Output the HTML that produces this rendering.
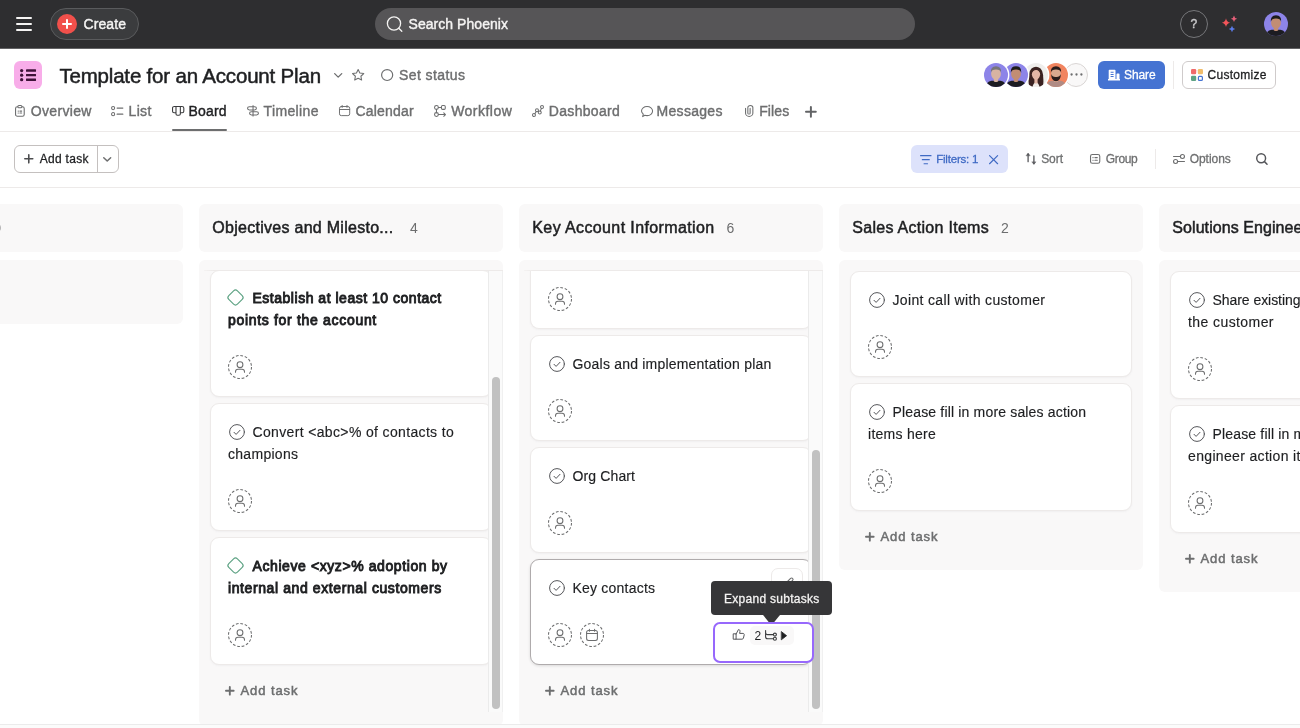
<!DOCTYPE html>
<html lang="en">
<head>
<meta charset="utf-8">
<title>Template for an Account Plan - Board</title>
<style>
*{box-sizing:border-box;margin:0;padding:0}
html,body{width:1300px;height:728px;overflow:hidden;background:#fff}
body{font-family:"Liberation Sans",sans-serif;font-size:14px;color:#1e1f21;position:relative}
.abs{position:absolute}
svg{display:block;overflow:visible}
#app{position:absolute;left:0;top:0;width:1300px;height:728px;overflow:hidden;will-change:transform}
.t{position:absolute;white-space:pre;display:block}
.med{-webkit-text-stroke:.4px currentColor}
.m2{-webkit-text-stroke:.15px currentColor}
.m3{-webkit-text-stroke:.28px currentColor}
.m5{-webkit-text-stroke:.5px currentColor}
.sb6{-webkit-text-stroke:.9px currentColor}
i{display:block}
#topbar{position:absolute;left:0;top:0;width:1300px;height:49px;background:#2e2e30;border-bottom:1px solid #626264}
#burger{position:absolute;left:16px;top:17px;width:16px;height:14px}
#burger i{position:absolute;left:0;width:16px;height:1.600px;background:#f5f4f3;border-radius:1px}
#create{position:absolute;left:50px;top:8px;width:89px;height:32px;border-radius:16px;border:1px solid #5a5b5d;background:#3b3c3e}
#create .dot{position:absolute;left:6px;top:5px;width:20px;height:20px;border-radius:50%;background:#f1504b}
#create .dot:before,#create .dot:after{content:"";position:absolute;background:#fff;border-radius:1px}
#create .dot:before{left:5px;top:9.100px;width:10px;height:1.800px}
#create .dot:after{left:9.100px;top:5px;width:1.800px;height:10px}
#search{position:absolute;left:375px;top:8px;width:540px;height:32px;border-radius:16px;background:#565557}
#help{position:absolute;left:1180px;top:10px;width:28px;height:28px;border-radius:50%;border:1px solid #76777a}
#picon{position:absolute;left:14px;top:61px;width:28px;height:28px;border-radius:6px;background:#f8ade9}
.hline{position:absolute;left:0;width:1300px;height:1px;background:#edeae9}
.vdiv{position:absolute;width:1px;background:#edeae9}
.more{position:absolute;left:1064px;top:62.500px;width:24px;height:24px;border-radius:50%;background:#f9f8f8;border:1px solid #d9d5d4}
.btn-share{position:absolute;left:1098px;top:61px;width:67px;height:28px;border-radius:6px;background:#4573d2}
.btn-cust{position:absolute;left:1182px;top:61px;width:94px;height:28px;border-radius:6px;background:#fff;border:1px solid #cfcbcb}
.btn-add{position:absolute;left:14px;top:145px;width:105px;height:28px;border-radius:6px;background:#fff;border:1px solid #c4c0bf}
.btn-add i{position:absolute;left:82px;top:0;width:1px;height:26px;background:#c4c0bf}
.chip{position:absolute;left:911px;top:145px;width:97px;height:28px;border-radius:6px;background:#dde2fb}
.colhead{position:absolute;top:204px;height:48px;width:304px;border-radius:6px;background:#f9f8f8}
.colbody{position:absolute;top:260px;width:304px;border-radius:6px;background:#f9f8f8}
.card{position:absolute;background:#fff;border:1px solid #edeae9;border-radius:9px;box-shadow:0 1px 2px rgba(109,110,111,.06)}
.card.hov{border-color:#afabac;box-shadow:0 1px 3px rgba(0,0,0,.12)}
.track{position:absolute;top:271px;width:15px;height:441px;background:#fafafa;border-left:1px solid #ebebeb;border-right:1px solid #f0f0f0}
.sb{position:absolute;width:8px;border-radius:4px;background:#c1c1c1}
.focus{position:absolute;left:713px;top:622px;width:101px;height:41px;border:2px solid #9768fc;border-radius:7px;background:#fff}
.tip{position:absolute;left:711px;top:581px;width:121px;height:34px;border-radius:4px;background:#363638}
.tip i{position:absolute;left:54px;top:28px;width:12px;height:12px;background:#363638;transform:rotate(45deg);border-radius:1px}
</style>
</head>
<body>
<div id="app">
<!-- ================= TOP BAR ================= -->
<div id="topbar">
<div id="burger"><i style="top:0"></i><i style="top:6.2px"></i><i style="top:12.4px"></i></div>
<div id="create"><div class="dot"></div></div>
<span class="t med" style="left:83.50px;top:15.00px;font-size:14px;line-height:18px;color:#f5f4f3;letter-spacing:0.094px;">Create</span>
<div id="search"></div>
<svg class="abs" style="left:386px;top:15px;" width="18" height="18" viewBox="0 0 18 18" fill="none" stroke="#f5f4f3" stroke-width="1.3" stroke-linecap="round" stroke-linejoin="round"><circle cx="8" cy="8.500" r="6.600"/><path d="M12.800 13.300l3 3"/></svg>
<span class="t med" style="left:408.50px;top:15.00px;font-size:14px;line-height:18px;color:#f5f4f3;letter-spacing:0.050px;">Search Phoenix</span>
<div id="help"></div>
<span class="t med" style="left:1190.50px;top:16.00px;font-size:12px;line-height:16px;color:#c9c9cb;letter-spacing:0.000px;">?</span>
<svg class="abs" style="left:1220px;top:14px;" width="20" height="20" viewBox="0 0 20 20" fill="none"><path d="M6 4.300 Q6.600 8.100 10.200 8.700 Q6.600 9.300 6 13.100 Q5.400 9.300 1.800 8.700 Q5.400 8.100 6 4.300Z" fill="#f2555a"/><path d="M14 1.400 Q14.400 4.300 17.200 4.700 Q14.400 5.100 14 8 Q13.600 5.100 10.800 4.700 Q13.600 4.300 14 1.400Z" fill="#e8607a"/><path d="M12 11.800 Q12.400 14.600 15.200 15 Q12.400 15.400 12 18.200 Q11.600 15.400 8.800 15 Q11.600 14.600 12 11.800Z" fill="#5a7be8"/></svg>
<svg class="abs" style="left:1264px;top:11.7px;" width="24" height="24" viewBox="0 0 24 24" fill="none"><defs><clipPath id="cp0"><circle cx="12" cy="12" r="12"/></clipPath><filter id="fcp0" x="-20%" y="-20%" width="140%" height="140%"><feGaussianBlur stdDeviation="0.450"/></filter></defs><g clip-path="url(#cp0)"><rect x="-1" y="-1" width="26" height="26" fill="#8d84e8"/><g filter="url(#fcp0)"><path d="M1.500 25 Q2 18.600 7.500 17.800 L16.500 17.800 Q22 18.600 22.500 25Z" fill="#1f1e24"/><path d="M9.800 14h4.400v4.200q-2.200 1.800-4.400 0z" fill="#c28d73"/><ellipse cx="12" cy="10.800" rx="4.900" ry="6.100" fill="#c28d73"/><path d="M6.900 9.800 Q6.300 3.200 12 3.200 Q17.700 3.200 17.100 9.800 Q16.300 6.500 12 6.600 Q7.700 6.500 6.900 9.800Z" fill="#1d1a1b"/></g></g></svg>
</div>
<!-- ================= PROJECT HEADER ================= -->
<div id="picon"></div>
<svg class="abs" style="left:19.98px;top:68.50px;" width="16.02" height="12.30" viewBox="0.000 -0.125 16.000 12.688" preserveAspectRatio="none" fill="#3f1238"><circle cx="1.650" cy="1.500" r="1.650"/><circle cx="1.650" cy="6.200" r="1.650"/><circle cx="1.650" cy="10.900" r="1.650"/><rect x="6" y="0.250" width="10" height="2.500" rx="0.400"/><rect x="6" y="4.950" width="10" height="2.500" rx="0.400"/><rect x="6" y="9.650" width="10" height="2.500" rx="0.400"/></svg>
<span class="t m5" style="left:59.40px;top:61.80px;font-size:20.5px;line-height:27px;color:#1e1f21;letter-spacing:-0.184px;">Template for an Account Plan</span>
<svg class="abs" style="left:333.50px;top:72.60px;" width="8.40" height="4.80" viewBox="0.250 0.250 9.500 5.500" preserveAspectRatio="none" fill="none" stroke="#6d6e6f" stroke-width="1.5" stroke-linecap="round" stroke-linejoin="round"><path d="M1 1l4 4 4-4"/></svg>
<svg class="abs" style="left:351.50px;top:68.80px;" width="12.30" height="11.60" viewBox="0.625 0.625 12.750 12.188" preserveAspectRatio="none" fill="none" stroke="#6d6e6f" stroke-width="1.1" stroke-linecap="round" stroke-linejoin="round"><path d="M7 1.200l1.750 3.700 4.050.550-2.950 2.800.75 4-3.600-1.950-3.600 1.950.75-4L1.200 5.450l4.050-.55z"/></svg>
<svg class="abs" style="left:380.80px;top:68.80px;" width="12.30" height="12.10" viewBox="0.688 0.688 12.625 12.625" preserveAspectRatio="none" fill="none" stroke="#6d6e6f" stroke-width="1.2" stroke-linecap="round" stroke-linejoin="round"><circle cx="7" cy="7" r="5.700"/></svg>
<span class="t med" style="left:399.00px;top:66.00px;font-size:14px;line-height:18px;color:#6d6e6f;letter-spacing:0.415px;">Set status</span>
<!-- members -->
<div class="more"></div>
<svg class="abs" style="left:1069.8px;top:73.2px;" width="13" height="3" viewBox="0 0 13 3" fill="#6d6e6f"><circle cx="1.600" cy="1.500" r="1.150"/><circle cx="6.500" cy="1.500" r="1.150"/><circle cx="11.400" cy="1.500" r="1.150"/></svg>
<svg class="abs" style="left:1044.2px;top:62.6px;" width="24" height="24" viewBox="0 0 24 24" fill="none"><defs><clipPath id="cp4"><circle cx="12" cy="12" r="12"/></clipPath><filter id="fcp4" x="-20%" y="-20%" width="140%" height="140%"><feGaussianBlur stdDeviation="0.450"/></filter></defs><circle cx="12" cy="12" r="13.400" fill="#fff"/><g clip-path="url(#cp4)"><rect x="-1" y="-1" width="26" height="26" fill="#f1845f"/><g filter="url(#fcp4)"><path d="M1.500 25 Q2 18.600 7.500 17.800 L16.500 17.800 Q22 18.600 22.500 25Z" fill="#b08b84"/><path d="M9.800 14h4.400v4.200q-2.200 1.800-4.400 0z" fill="#d9a88f"/><ellipse cx="12" cy="10.800" rx="4.900" ry="6.100" fill="#d9a88f"/><path d="M7.100 11 Q7.300 18.200 12 18.200 Q16.700 18.200 16.900 11 Q15.600 14.300 12 14 Q8.400 14.300 7.100 11Z" fill="#2b1f1c"/><path d="M6.900 9.800 Q6.300 3.200 12 3.200 Q17.700 3.200 17.100 9.800 Q16.300 6.500 12 6.600 Q7.700 6.500 6.900 9.800Z" fill="#2b1f1c"/></g></g></svg>
<svg class="abs" style="left:1024.3px;top:62.6px;" width="24" height="24" viewBox="0 0 24 24" fill="none"><defs><clipPath id="cp3"><circle cx="12" cy="12" r="12"/></clipPath><filter id="fcp3" x="-20%" y="-20%" width="140%" height="140%"><feGaussianBlur stdDeviation="0.450"/></filter></defs><circle cx="12" cy="12" r="13.400" fill="#fff"/><g clip-path="url(#cp3)"><rect x="-1" y="-1" width="26" height="26" fill="#efeeec"/><g filter="url(#fcp3)"><path d="M5 25 Q3.500 9 7.500 5.500 Q12 2 16.500 5.500 Q20.500 9 19 25Z" fill="#3a2420"/><path d="M8.500 25 Q9 19.500 12 19.500 Q15 19.500 15.500 25Z" fill="#f1ece9"/><rect x="10.400" y="15" width="3.200" height="5.500" fill="#e3b6a6"/><ellipse cx="12" cy="11.300" rx="4.100" ry="5.400" fill="#e3b6a6"/><path d="M7.600 10.500 Q7.500 4.800 12 4.800 Q16.500 4.800 16.400 10.500 Q14.500 6.500 12 7 Q9 7.200 7.600 10.500Z" fill="#3a2420"/></g></g></svg>
<svg class="abs" style="left:1004.4px;top:62.6px;" width="24" height="24" viewBox="0 0 24 24" fill="none"><defs><clipPath id="cp2"><circle cx="12" cy="12" r="12"/></clipPath><filter id="fcp2" x="-20%" y="-20%" width="140%" height="140%"><feGaussianBlur stdDeviation="0.450"/></filter></defs><circle cx="12" cy="12" r="13.400" fill="#fff"/><g clip-path="url(#cp2)"><rect x="-1" y="-1" width="26" height="26" fill="#8d84e8"/><g filter="url(#fcp2)"><path d="M1.500 25 Q2 18.600 7.500 17.800 L16.500 17.800 Q22 18.600 22.500 25Z" fill="#1f1e24"/><path d="M9.800 14h4.400v4.200q-2.200 1.800-4.400 0z" fill="#c28d73"/><ellipse cx="12" cy="10.800" rx="4.900" ry="6.100" fill="#c28d73"/><path d="M6.900 9.800 Q6.300 3.200 12 3.200 Q17.700 3.200 17.100 9.800 Q16.300 6.500 12 6.600 Q7.700 6.500 6.900 9.800Z" fill="#1d1a1b"/></g></g></svg>
<svg class="abs" style="left:984.2px;top:62.6px;" width="24" height="24" viewBox="0 0 24 24" fill="none"><defs><clipPath id="cp1"><circle cx="12" cy="12" r="12"/></clipPath><filter id="fcp1" x="-20%" y="-20%" width="140%" height="140%"><feGaussianBlur stdDeviation="0.450"/></filter></defs><circle cx="12" cy="12" r="13.400" fill="#fff"/><g clip-path="url(#cp1)"><rect x="-1" y="-1" width="26" height="26" fill="#8d84e8"/><g filter="url(#fcp1)"><path d="M1.500 25 Q2 18.600 7.500 17.800 L16.500 17.800 Q22 18.600 22.500 25Z" fill="#1f1e22"/><path d="M9.800 14h4.400v4.200q-2.200 1.800-4.400 0z" fill="#d8b3a2"/><ellipse cx="12" cy="10.800" rx="4.900" ry="6.100" fill="#d8b3a2"/><path d="M6.900 9.800 Q6.300 3.200 12 3.200 Q17.700 3.200 17.100 9.800 Q16.300 6.500 12 6.600 Q7.700 6.500 6.900 9.800Z" fill="#77757a"/></g></g></svg>
<div class="btn-share"></div>
<svg class="abs" style="left:1107.5px;top:69px;" width="12" height="12" viewBox="0 0 12 12" fill="#fff"><path d="M1.500 0.800h5.200a.8.800 0 0 1 .8.800V10h1V5.300a.8.800 0 0 1 .800-.8h1.400a.8.800 0 0 1 .800.800V10h.5v1.600H0V10h.7V1.600a.8.800 0 0 1 .8-.8zM2.600 2.700v1h3v-1zm0 2.200v1h3v-1zm0 2.200v1h3v-1z" fill-rule="evenodd"/></svg>
<span class="t m3" style="left:1124.00px;top:67.20px;font-size:12px;line-height:16px;color:#fff;letter-spacing:-0.083px;">Share</span>
<div class="vdiv" style="left:1173px;top:61px;height:28px"></div>
<div class="btn-cust"></div>
<svg class="abs" style="left:1191px;top:69px;" width="12" height="12" viewBox="0 0 12 12" fill="none"><rect x="0" y="0" width="5.200" height="5.200" rx="1.300" fill="#f06a6a"/><rect x="6.800" y="0" width="5.200" height="5.200" rx="1.300" fill="#f1bd6c"/><rect x="0" y="6.800" width="5.200" height="5.200" rx="1.300" fill="#5da283"/><rect x="7.400" y="7.400" width="4" height="4" rx="1" fill="none" stroke="#4573d2" stroke-width="1.200"/></svg>
<span class="t m3" style="left:1207.50px;top:67.20px;font-size:12px;line-height:16px;color:#1e1f21;letter-spacing:0.289px;">Customize</span>
<!-- ================= TABS ================= -->
<svg class="abs" style="left:15.06px;top:104.90px;" width="9.78" height="11.80" viewBox="0.438 0.438 9.812 11.938" preserveAspectRatio="none" fill="none" stroke="#6d6e6f" stroke-width="1.1" stroke-linecap="round" stroke-linejoin="round"><rect x="1" y="2.200" width="8.700" height="9.600" rx="1.800"/><rect x="3.300" y="1" width="4.100" height="2.300" rx="1.100" fill="#fff"/><path d="M3.600 6.600h.2M5.400 6.600h1.700M3.600 8.600h.2M5.400 8.600h1.700"/></svg>
<span class="t med" style="left:30.70px;top:101.70px;font-size:14px;line-height:18px;color:#6d6e6f;letter-spacing:0.349px;">Overview</span>
<svg class="abs" style="left:111.20px;top:105.60px;" width="12.40" height="10.30" viewBox="0.125 1.188 12.812 10.375" preserveAspectRatio="none" fill="none" stroke="#6d6e6f" stroke-width="1.1" stroke-linecap="round" stroke-linejoin="round"><circle cx="2.300" cy="3.300" r="1.600"/><circle cx="2.300" cy="9.400" r="1.600"/><path d="M6.400 3.300h6M6.400 9.400h6"/></svg>
<span class="t med" style="left:128.60px;top:101.70px;font-size:14px;line-height:18px;color:#6d6e6f;letter-spacing:0.301px;">List</span>
<svg class="abs" style="left:171.60px;top:105.75px;" width="12.35" height="9.75" viewBox="0.250 0.438 12.500 10.938" preserveAspectRatio="none" fill="none" stroke="#3b3c3e" stroke-width="1.1" stroke-linecap="round" stroke-linejoin="round"><path d="M2.600 1h7.800a1.800 1.800 0 0 1 1.800 1.800v3.600a1.600 1.600 0 0 1-1.600 1.600H8.700v1.400a1.400 1.400 0 0 1-1.400 1.400H5.700a1.400 1.400 0 0 1-1.400-1.400V8H2.400a1.600 1.600 0 0 1-1.600-1.600V2.800A1.800 1.800 0 0 1 2.600 1zM4.300 1v7M8.700 1v7"/></svg>
<span class="t med" style="left:188.60px;top:101.70px;font-size:14px;line-height:18px;color:#1e1f21;letter-spacing:0.135px;">Board</span>
<svg class="abs" style="left:246.90px;top:104.90px;" width="12.00" height="11.60" viewBox="0.438 0.062 12.438 13.062" preserveAspectRatio="none" fill="none" stroke="#6d6e6f" stroke-width="1.1" stroke-linecap="round" stroke-linejoin="round"><rect x="1" y="2" width="9.200" height="3.700" rx="1.850"/><rect x="3.100" y="7.600" width="9.200" height="3.700" rx="1.850"/><path d="M6.700 0.600v12"/></svg>
<span class="t med" style="left:263.50px;top:101.70px;font-size:14px;line-height:18px;color:#6d6e6f;letter-spacing:0.373px;">Timeline</span>
<svg class="abs" style="left:339.10px;top:105.40px;" width="11.20" height="11.10" viewBox="0.250 0.250 12.500 12.688" preserveAspectRatio="none" fill="none" stroke="#6d6e6f" stroke-width="1.1" stroke-linecap="round" stroke-linejoin="round"><rect x="0.800" y="2" width="11.400" height="10.400" rx="2"/><path d="M0.800 5.400h11.400M3.800 0.800v2.200M9.200 0.800v2.200"/></svg>
<span class="t med" style="left:355.40px;top:101.70px;font-size:14px;line-height:18px;color:#6d6e6f;letter-spacing:0.225px;">Calendar</span>
<svg class="abs" style="left:434.20px;top:104.80px;" width="12.00" height="12.00" viewBox="0.250 0.250 12.500 12.500" preserveAspectRatio="none" fill="none" stroke="#6d6e6f" stroke-width="1.1" stroke-linecap="round" stroke-linejoin="round"><circle cx="2.800" cy="2.800" r="2"/><rect x="8" y="0.800" width="4" height="4" rx="1.200"/><circle cx="2.800" cy="10.200" r="2"/><path d="M4.800 2.800h3.200M2.800 4.800v3.400M4.800 10.200h7.400M10.400 8.400l1.800 1.800-1.800 1.800"/></svg>
<span class="t med" style="left:451.20px;top:101.70px;font-size:14px;line-height:18px;color:#6d6e6f;letter-spacing:0.470px;">Workflow</span>
<svg class="abs" style="left:532.20px;top:104.80px;" width="12.00" height="12.00" viewBox="0.062 0.062 12.875 12.875" preserveAspectRatio="none" fill="none" stroke="#6d6e6f" stroke-width="1.1" stroke-linecap="round" stroke-linejoin="round"><circle cx="2.200" cy="10.800" r="1.600"/><circle cx="5.400" cy="5.800" r="1.600"/><circle cx="8.400" cy="8" r="1.600"/><circle cx="10.800" cy="2.200" r="1.600"/><path d="M3.100 9.400l1.400-2.200M6.700 6.800l.4.300M9 6.500l1.200-2.800"/></svg>
<span class="t med" style="left:548.80px;top:101.70px;font-size:14px;line-height:18px;color:#6d6e6f;letter-spacing:0.312px;">Dashboard</span>
<svg class="abs" style="left:640.50px;top:105.70px;" width="12.10" height="11.10" viewBox="0.062 0.438 12.875 11.688" preserveAspectRatio="none" fill="none" stroke="#6d6e6f" stroke-width="1.1" stroke-linecap="round" stroke-linejoin="round"><path d="M6.500 1c3.300 0 5.900 2.100 5.900 4.800s-2.600 4.800-5.900 4.800c-.8 0-1.600-.1-2.300-.4L1.800 11.600l.7-2.600C1.300 8.100.6 7 .6 5.800.6 3.100 3.200 1 6.500 1z"/></svg>
<span class="t med" style="left:656.60px;top:101.70px;font-size:14px;line-height:18px;color:#6d6e6f;letter-spacing:0.284px;">Messages</span>
<svg class="abs" style="left:745.10px;top:104.90px;" width="8.40" height="11.90" viewBox="0.500 0.562 7.375 12.312" preserveAspectRatio="none" fill="none" stroke="#6d6e6f" stroke-width="0.95" stroke-linecap="round" stroke-linejoin="round"><path d="M1 4v5.200a3.200 3.200 0 0 0 6.400 0V3.200a2.200 2.200 0 0 0-4.400 0v5.800a1 1 0 0 0 2 0V4"/></svg>
<span class="t med" style="left:759.20px;top:101.70px;font-size:14px;line-height:18px;color:#6d6e6f;letter-spacing:0.134px;">Files</span>
<div class="abs" style="left:171.500px;top:129px;width:55px;height:2px;background:#6d6e6f;border-radius:1px"></div>
<svg class="abs" style="left:805.40px;top:106.00px;" width="11.80" height="11.70" viewBox="0.000 0.000 12.000 12.000" preserveAspectRatio="none" fill="none" stroke="#626365" stroke-width="2" stroke-linecap="round" stroke-linejoin="round"><path d="M6 1v10M1 6h10"/></svg>
<div class="hline" style="top:131px"></div>
<!-- ================= TOOLBAR ================= -->
<div class="btn-add"><i></i></div>
<svg class="abs" style="left:24.20px;top:154.20px;" width="9.60" height="9.60" viewBox="0.000 0.000 9.625 9.562" preserveAspectRatio="none" fill="none" stroke="#4c4d4f" stroke-width="1.6" stroke-linecap="round" stroke-linejoin="round"><path d="M4.800 0.800v8M0.800 4.800h8"/></svg>
<span class="t m3" style="left:39.70px;top:151.20px;font-size:12px;line-height:16px;color:#1e1f21;letter-spacing:0.300px;">Add task</span>
<svg class="abs" style="left:103.40px;top:156.80px;" width="8.40" height="4.80" viewBox="-0.062 -0.062 8.500 5.000" preserveAspectRatio="none" fill="none" stroke="#6d6e6f" stroke-width="1.5" stroke-linecap="round" stroke-linejoin="round"><path d="M0.700 0.700l3.500 3.500 3.500-3.500"/></svg>
<div class="chip"></div>
<svg class="abs" style="left:920.00px;top:154.80px;" width="11.60" height="9.40" viewBox="0.000 0.875 12.000 9.250" preserveAspectRatio="none" fill="none" stroke="#3f6ac4" stroke-width="1.2" stroke-linecap="round" stroke-linejoin="round"><path d="M0.600 1.500h10.800M2.400 5.500h7.200M4.200 9.500h3.600"/></svg>
<span class="t m3" style="left:936.20px;top:151.70px;font-size:11.5px;line-height:15px;color:#3f6ac4;letter-spacing:-0.199px;">Filters: 1</span>
<svg class="abs" style="left:988.90px;top:154.50px;" width="9.20" height="9.30" viewBox="0.062 0.062 8.875 8.875" preserveAspectRatio="none" fill="none" stroke="#3f6ac4" stroke-width="1.1" stroke-linecap="round" stroke-linejoin="round"><path d="M0.600 0.600l7.800 7.800M8.400 0.600l-7.800 7.800"/></svg>
<svg class="abs" style="left:1026.20px;top:153.20px;" width="10.00" height="11.60" viewBox="0.250 0.438 9.312 12.125" preserveAspectRatio="none" fill="none" stroke="#55565a" stroke-width="1.2" stroke-linecap="round" stroke-linejoin="round"><path d="M2.200 1.400v8.200M7.600 3.400v8.200" /><path d="M0.500 3l1.700-2.300L3.900 3zM5.900 10l1.700 2.300L9.300 10z" fill="#55565a" stroke-width="0.500"/></svg>
<span class="t m3" style="left:1041.20px;top:151.20px;font-size:12px;line-height:16px;color:#6d6e6f;letter-spacing:-0.072px;">Sort</span>
<svg class="abs" style="left:1090.20px;top:154.00px;" width="10.30" height="9.80" viewBox="0.062 0.062 10.375 9.875" preserveAspectRatio="none" fill="none" stroke="#6d6e6f" stroke-width="1.1" stroke-linecap="round" stroke-linejoin="round"><rect x="0.600" y="0.600" width="9.300" height="8.800" rx="1.800"/><path d="M3 3.700h.2M5 3.700h2.400M3 6.300h.2M5 6.300h2.400"/></svg>
<span class="t m3" style="left:1105.80px;top:151.20px;font-size:12px;line-height:16px;color:#6d6e6f;letter-spacing:-0.365px;">Group</span>
<div class="vdiv" style="left:1155px;top:149px;height:20px"></div>
<svg class="abs" style="left:1173.20px;top:153.80px;" width="12.00" height="10.00" viewBox="0.062 -0.062 11.875 10.125" preserveAspectRatio="none" fill="none" stroke="#6d6e6f" stroke-width="1.1" stroke-linecap="round" stroke-linejoin="round"><circle cx="9.400" cy="2.500" r="2"/><circle cx="2.600" cy="7.500" r="2"/><path d="M0.600 2.500h6.800M4.600 7.500h6.800"/></svg>
<span class="t m3" style="left:1189.70px;top:151.20px;font-size:12px;line-height:16px;color:#6d6e6f;letter-spacing:-0.043px;">Options</span>
<svg class="abs" style="left:1256.20px;top:153.00px;" width="11.80" height="12.00" viewBox="0.062 0.062 12.000 12.000" preserveAspectRatio="none" fill="none" stroke="#55565a" stroke-width="1.5" stroke-linecap="round" stroke-linejoin="round"><circle cx="5.300" cy="5.300" r="4.500"/><path d="M8.700 8.700l2.600 2.600"/></svg>
<div class="hline" style="top:187px"></div>
<!-- ================= BOARD ================= -->
<div class="colhead" style="left:-121px"></div><div class="colbody" style="left:-121px;height:64px"></div>
<span class="t" style="left:-6.70px;top:219.00px;font-size:14px;line-height:18px;color:#6d6e6f;letter-spacing:0.000px;">0</span>
<div class="colhead" style="left:199px"></div><div class="colbody" style="left:199px;height:466px"></div>
<span class="t m5" style="left:212.30px;top:217.00px;font-size:16px;line-height:21px;color:#1e1f21;letter-spacing:0.275px;">Objectives and Milesto...</span>
<span class="t" style="left:410.00px;top:219.00px;font-size:14px;line-height:18px;color:#6d6e6f;letter-spacing:0.000px;">4</span>
<div class="colhead" style="left:519px"></div><div class="colbody" style="left:519px;height:466px"></div>
<span class="t m5" style="left:532.30px;top:217.00px;font-size:16px;line-height:21px;color:#1e1f21;letter-spacing:0.385px;">Key Account Information</span>
<span class="t" style="left:726.50px;top:219.00px;font-size:14px;line-height:18px;color:#6d6e6f;letter-spacing:0.000px;">6</span>
<div class="colhead" style="left:839px"></div><div class="colbody" style="left:839px;height:310px"></div>
<span class="t m5" style="left:852.30px;top:217.00px;font-size:16px;line-height:21px;color:#1e1f21;letter-spacing:0.281px;">Sales Action Items</span>
<span class="t" style="left:1001.00px;top:219.00px;font-size:14px;line-height:18px;color:#6d6e6f;letter-spacing:0.000px;">2</span>
<div class="colhead" style="left:1159px"></div><div class="colbody" style="left:1159px;height:332px"></div>
<span class="t m5" style="left:1172.30px;top:217.00px;font-size:16px;line-height:21px;color:#1e1f21;letter-spacing:0.074px;">Solutions Engineer Action Items</span>
<span class="t" style="left:1500.00px;top:219.00px;font-size:14px;line-height:18px;color:#6d6e6f;letter-spacing:0.000px;">3</span>
<div class="card" style="left:210px;top:270px;width:282px;height:127px;"></div><span class="t sb6" style="left:252.50px;top:288.60px;font-size:14px;line-height:18px;color:#1e1f21;letter-spacing:0.515px;">Establish at least 10 contact</span><span class="t sb6" style="left:228.00px;top:310.60px;font-size:14px;line-height:18px;color:#1e1f21;letter-spacing:0.685px;">points for the account</span><svg class="abs" style="left:227.2px;top:288.6px;" width="17" height="17" viewBox="0 0 17 17" fill="none" stroke="#5da283" stroke-width="1.15" stroke-linecap="round" stroke-linejoin="round"><rect x="2.400" y="2.400" width="12.200" height="12.200" rx="2.700" transform="rotate(45 8.500 8.500)"/></svg><svg class="abs" style="left:227.8px;top:355px;" width="24" height="24" viewBox="0 0 24 24" fill="none" stroke="#6d6e6f" stroke-width="1.05" stroke-linecap="round" stroke-linejoin="round"><circle cx="12" cy="12" r="11.500" stroke-dasharray="2.700 1.816" stroke-linecap="butt"/><circle cx="12" cy="9.700" r="2.900"/><path d="M7.500 17.300v-.5a2.500 2.500 0 0 1 2.500-2.500h4a2.500 2.500 0 0 1 2.500 2.500v.5"/></svg>
<div class="card" style="left:210px;top:403px;width:282px;height:128px;"></div><span class="t m2" style="left:252.50px;top:422.60px;font-size:14px;line-height:18px;color:#1e1f21;letter-spacing:0.350px;">Convert &lt;abc&gt;% of contacts to</span><span class="t m2" style="left:228.00px;top:444.60px;font-size:14px;line-height:18px;color:#1e1f21;letter-spacing:0.287px;">champions</span><svg class="abs" style="left:228.7px;top:424px;" width="16" height="16" viewBox="0 0 16 16" fill="none" stroke="#55565a" stroke-width="1" stroke-linecap="round" stroke-linejoin="round"><circle cx="8" cy="8" r="7.400"/><path d="M5 8.300l2.100 2.100 3.900-4.100" stroke-width="1"/></svg><svg class="abs" style="left:227.8px;top:489px;" width="24" height="24" viewBox="0 0 24 24" fill="none" stroke="#6d6e6f" stroke-width="1.05" stroke-linecap="round" stroke-linejoin="round"><circle cx="12" cy="12" r="11.500" stroke-dasharray="2.700 1.816" stroke-linecap="butt"/><circle cx="12" cy="9.700" r="2.900"/><path d="M7.500 17.300v-.5a2.500 2.500 0 0 1 2.500-2.500h4a2.500 2.500 0 0 1 2.500 2.500v.5"/></svg>
<div class="card" style="left:210px;top:537px;width:282px;height:128px;"></div><span class="t sb6" style="left:252.50px;top:556.60px;font-size:14px;line-height:18px;color:#1e1f21;letter-spacing:0.589px;">Achieve &lt;xyz&gt;% adoption by</span><span class="t sb6" style="left:228.00px;top:578.60px;font-size:14px;line-height:18px;color:#1e1f21;letter-spacing:0.597px;">internal and external customers</span><svg class="abs" style="left:227.2px;top:556.6px;" width="17" height="17" viewBox="0 0 17 17" fill="none" stroke="#5da283" stroke-width="1.15" stroke-linecap="round" stroke-linejoin="round"><rect x="2.400" y="2.400" width="12.200" height="12.200" rx="2.700" transform="rotate(45 8.500 8.500)"/></svg><svg class="abs" style="left:227.8px;top:623px;" width="24" height="24" viewBox="0 0 24 24" fill="none" stroke="#6d6e6f" stroke-width="1.05" stroke-linecap="round" stroke-linejoin="round"><circle cx="12" cy="12" r="11.500" stroke-dasharray="2.700 1.816" stroke-linecap="butt"/><circle cx="12" cy="9.700" r="2.900"/><path d="M7.500 17.300v-.5a2.500 2.500 0 0 1 2.500-2.500h4a2.500 2.500 0 0 1 2.500 2.500v.5"/></svg>
<svg class="abs" style="left:224.70px;top:685.50px;" width="9.60" height="9.60" viewBox="-0.062 -0.062 9.688 9.688" preserveAspectRatio="none" fill="none" stroke="#6d6e6f" stroke-width="1.9" stroke-linecap="round" stroke-linejoin="round"><path d="M4.800 0.900v7.800M0.900 4.800h7.800"/></svg><span class="t m5" style="left:240.50px;top:681.80px;font-size:13px;line-height:17px;color:#6d6e6f;letter-spacing:0.915px;">Add task</span>
<div class="abs" style="left:204px;top:270px;width:299px;height:1px;background:linear-gradient(90deg,rgba(237,234,233,.4),#edeae9 10px)"></div><div class="track" style="left:488px"></div><div class="sb" style="left:492px;top:377px;height:332px"></div>
<div class="card" style="left:530px;top:271px;width:282px;height:58px;border-top:0;border-radius:0 0 9px 9px"></div>
<svg class="abs" style="left:547.8px;top:287px;" width="24" height="24" viewBox="0 0 24 24" fill="none" stroke="#6d6e6f" stroke-width="1.05" stroke-linecap="round" stroke-linejoin="round"><circle cx="12" cy="12" r="11.500" stroke-dasharray="2.700 1.816" stroke-linecap="butt"/><circle cx="12" cy="9.700" r="2.900"/><path d="M7.500 17.300v-.5a2.500 2.500 0 0 1 2.500-2.500h4a2.500 2.500 0 0 1 2.500 2.500v.5"/></svg>
<div class="card" style="left:530px;top:335px;width:282px;height:106px;"></div><span class="t m2" style="left:572.50px;top:354.60px;font-size:14px;line-height:18px;color:#1e1f21;letter-spacing:0.205px;">Goals and implementation plan</span><svg class="abs" style="left:548.7px;top:356px;" width="16" height="16" viewBox="0 0 16 16" fill="none" stroke="#55565a" stroke-width="1" stroke-linecap="round" stroke-linejoin="round"><circle cx="8" cy="8" r="7.400"/><path d="M5 8.300l2.100 2.100 3.900-4.100" stroke-width="1"/></svg><svg class="abs" style="left:547.8px;top:399px;" width="24" height="24" viewBox="0 0 24 24" fill="none" stroke="#6d6e6f" stroke-width="1.05" stroke-linecap="round" stroke-linejoin="round"><circle cx="12" cy="12" r="11.500" stroke-dasharray="2.700 1.816" stroke-linecap="butt"/><circle cx="12" cy="9.700" r="2.900"/><path d="M7.500 17.300v-.5a2.500 2.500 0 0 1 2.500-2.500h4a2.500 2.500 0 0 1 2.500 2.500v.5"/></svg>
<div class="card" style="left:530px;top:447px;width:282px;height:106px;"></div><span class="t m2" style="left:572.50px;top:466.60px;font-size:14px;line-height:18px;color:#1e1f21;letter-spacing:0.129px;">Org Chart</span><svg class="abs" style="left:548.7px;top:468px;" width="16" height="16" viewBox="0 0 16 16" fill="none" stroke="#55565a" stroke-width="1" stroke-linecap="round" stroke-linejoin="round"><circle cx="8" cy="8" r="7.400"/><path d="M5 8.300l2.100 2.100 3.900-4.100" stroke-width="1"/></svg><svg class="abs" style="left:547.8px;top:511px;" width="24" height="24" viewBox="0 0 24 24" fill="none" stroke="#6d6e6f" stroke-width="1.05" stroke-linecap="round" stroke-linejoin="round"><circle cx="12" cy="12" r="11.500" stroke-dasharray="2.700 1.816" stroke-linecap="butt"/><circle cx="12" cy="9.700" r="2.900"/><path d="M7.500 17.300v-.5a2.500 2.500 0 0 1 2.500-2.500h4a2.500 2.500 0 0 1 2.500 2.500v.5"/></svg>
<div class="card hov" style="left:530px;top:559px;width:282px;height:106px;"></div><span class="t m2" style="left:572.50px;top:578.60px;font-size:14px;line-height:18px;color:#1e1f21;letter-spacing:0.213px;">Key contacts</span><svg class="abs" style="left:548.7px;top:580px;" width="16" height="16" viewBox="0 0 16 16" fill="none" stroke="#55565a" stroke-width="1" stroke-linecap="round" stroke-linejoin="round"><circle cx="8" cy="8" r="7.400"/><path d="M5 8.300l2.100 2.100 3.900-4.100" stroke-width="1"/></svg><svg class="abs" style="left:547.8px;top:623px;" width="24" height="24" viewBox="0 0 24 24" fill="none" stroke="#6d6e6f" stroke-width="1.05" stroke-linecap="round" stroke-linejoin="round"><circle cx="12" cy="12" r="11.500" stroke-dasharray="2.700 1.816" stroke-linecap="butt"/><circle cx="12" cy="9.700" r="2.900"/><path d="M7.500 17.300v-.5a2.500 2.500 0 0 1 2.500-2.500h4a2.500 2.500 0 0 1 2.500 2.500v.5"/></svg><svg class="abs" style="left:580px;top:623px;" width="24" height="24" viewBox="0 0 24 24" fill="none" stroke="#6d6e6f" stroke-width="1.05" stroke-linecap="round" stroke-linejoin="round"><circle cx="12" cy="12" r="11.500" stroke-dasharray="2.700 1.816" stroke-linecap="butt"/><rect x="6.600" y="7.400" width="10.800" height="10" rx="2"/><path d="M6.600 10.500h10.800M9.400 6.200v2M14.600 6.200v2"/></svg>
<svg class="abs" style="left:544.70px;top:685.50px;" width="9.60" height="9.60" viewBox="-0.062 -0.062 9.688 9.688" preserveAspectRatio="none" fill="none" stroke="#6d6e6f" stroke-width="1.9" stroke-linecap="round" stroke-linejoin="round"><path d="M4.800 0.900v7.800M0.900 4.800h7.800"/></svg><span class="t m5" style="left:560.50px;top:681.80px;font-size:13px;line-height:17px;color:#6d6e6f;letter-spacing:0.915px;">Add task</span>
<div class="abs" style="left:524px;top:270px;width:299px;height:1px;background:linear-gradient(90deg,rgba(237,234,233,.4),#edeae9 10px)"></div><div class="track" style="left:808px"></div><div class="sb" style="left:812px;top:449.5px;height:259.5px"></div>
<div class="abs" style="left:771px;top:568px;width:32px;height:28px;border:1px solid #edeae9;border-radius:7px;background:#fff"></div>
<svg class="abs" style="left:782px;top:576.5px;" width="12" height="12" viewBox="0 0 12 12" fill="none" stroke="#6d6e6f" stroke-width="1.1" stroke-linecap="round" stroke-linejoin="round"><path d="M2 10l1-3 5.600-5.600a1.400 1.400 0 0 1 2 2L5 9z"/></svg>
<div class="tip"></div>
<svg class="abs" style="left:762px;top:614px;" width="19" height="10" viewBox="0 0 19 10" fill="#363638"><path d="M0.700 0h17.700v0.600L11 9.400h-3.200L0.700 0.600z"/></svg>
<div class="focus"></div>
<div class="abs" style="left:749.500px;top:626px;width:44.500px;height:19px;border-radius:5px;background:#f9f8f8"></div>
<svg class="abs" style="left:733px;top:629.4px;" width="12.4" height="10.8" viewBox="0 0 12.4 10.8" fill="none" stroke="#55565a" stroke-width="1" stroke-linecap="round" stroke-linejoin="round"><path d="M0.600 4.800h2.500v5.400H0.600zM3.100 5.100l2.300-4.500c1.200 0 1.800.800 1.600 1.800l-.4 2h3.400c.9 0 1.400.7 1.200 1.500l-.8 3.300c-.2.600-.7 1-1.400 1H3.100"/></svg>
<span class="t" style="left:754.50px;top:627.50px;font-size:12px;line-height:16px;color:#1e1f21;letter-spacing:0.000px;">2</span>
<svg class="abs" style="left:765px;top:630px;" width="13" height="11" viewBox="0 0 13 11" fill="none" stroke="#3b3c3e" stroke-width="1.1" stroke-linecap="round" stroke-linejoin="round"><path d="M0.600 0.600v2a2 2 0 0 0 2 2h5.600M0.600 2.600v4.200a2 2 0 0 0 2 2h5.600"/><circle cx="9.900" cy="4.600" r="1.500" fill="#f9f8f8"/><circle cx="9.900" cy="8.800" r="1.500" fill="#f9f8f8"/></svg>
<svg class="abs" style="left:781px;top:630.7px;" width="6.5" height="9.4" viewBox="0 0 6.5 9.4" fill="#1e1f21" stroke="#1e1f21" stroke-width="0.8" stroke-linecap="round" stroke-linejoin="round"><path d="M0.600 0.800l5 3.900-5 3.900z"/></svg>
<span class="t m3" style="left:724.00px;top:591.20px;font-size:12px;line-height:16px;color:#f5f4f3;letter-spacing:0.279px;">Expand subtasks</span>
<div class="card" style="left:850px;top:271px;width:282px;height:106px;"></div><span class="t m2" style="left:892.50px;top:290.60px;font-size:14px;line-height:18px;color:#1e1f21;letter-spacing:0.338px;">Joint call with customer</span><svg class="abs" style="left:868.7px;top:292px;" width="16" height="16" viewBox="0 0 16 16" fill="none" stroke="#55565a" stroke-width="1" stroke-linecap="round" stroke-linejoin="round"><circle cx="8" cy="8" r="7.400"/><path d="M5 8.300l2.100 2.100 3.900-4.100" stroke-width="1"/></svg><svg class="abs" style="left:867.8px;top:335px;" width="24" height="24" viewBox="0 0 24 24" fill="none" stroke="#6d6e6f" stroke-width="1.05" stroke-linecap="round" stroke-linejoin="round"><circle cx="12" cy="12" r="11.500" stroke-dasharray="2.700 1.816" stroke-linecap="butt"/><circle cx="12" cy="9.700" r="2.900"/><path d="M7.500 17.300v-.5a2.500 2.500 0 0 1 2.500-2.500h4a2.500 2.500 0 0 1 2.500 2.500v.5"/></svg>
<div class="card" style="left:850px;top:383px;width:282px;height:128px;"></div><span class="t m2" style="left:892.50px;top:402.60px;font-size:14px;line-height:18px;color:#1e1f21;letter-spacing:0.167px;">Please fill in more sales action</span><span class="t m2" style="left:868.00px;top:424.60px;font-size:14px;line-height:18px;color:#1e1f21;letter-spacing:0.266px;">items here</span><svg class="abs" style="left:868.7px;top:404px;" width="16" height="16" viewBox="0 0 16 16" fill="none" stroke="#55565a" stroke-width="1" stroke-linecap="round" stroke-linejoin="round"><circle cx="8" cy="8" r="7.400"/><path d="M5 8.300l2.100 2.100 3.900-4.100" stroke-width="1"/></svg><svg class="abs" style="left:867.8px;top:469px;" width="24" height="24" viewBox="0 0 24 24" fill="none" stroke="#6d6e6f" stroke-width="1.05" stroke-linecap="round" stroke-linejoin="round"><circle cx="12" cy="12" r="11.500" stroke-dasharray="2.700 1.816" stroke-linecap="butt"/><circle cx="12" cy="9.700" r="2.900"/><path d="M7.500 17.300v-.5a2.500 2.500 0 0 1 2.500-2.500h4a2.500 2.500 0 0 1 2.500 2.500v.5"/></svg>
<svg class="abs" style="left:864.70px;top:531.50px;" width="9.60" height="9.60" viewBox="-0.062 -0.062 9.688 9.688" preserveAspectRatio="none" fill="none" stroke="#6d6e6f" stroke-width="1.9" stroke-linecap="round" stroke-linejoin="round"><path d="M4.800 0.900v7.800M0.900 4.800h7.800"/></svg><span class="t m5" style="left:880.50px;top:527.80px;font-size:13px;line-height:17px;color:#6d6e6f;letter-spacing:0.915px;">Add task</span>
<div class="card" style="left:1170px;top:271px;width:282px;height:128px;"></div><span class="t m2" style="left:1212.50px;top:290.60px;font-size:14px;line-height:18px;color:#1e1f21;letter-spacing:-0.055px;">Share existing collateral with</span><span class="t m2" style="left:1188.00px;top:312.60px;font-size:14px;line-height:18px;color:#1e1f21;letter-spacing:0.415px;">the customer</span><svg class="abs" style="left:1188.7px;top:292px;" width="16" height="16" viewBox="0 0 16 16" fill="none" stroke="#55565a" stroke-width="1" stroke-linecap="round" stroke-linejoin="round"><circle cx="8" cy="8" r="7.400"/><path d="M5 8.300l2.100 2.100 3.900-4.100" stroke-width="1"/></svg><svg class="abs" style="left:1187.8px;top:357px;" width="24" height="24" viewBox="0 0 24 24" fill="none" stroke="#6d6e6f" stroke-width="1.05" stroke-linecap="round" stroke-linejoin="round"><circle cx="12" cy="12" r="11.500" stroke-dasharray="2.700 1.816" stroke-linecap="butt"/><circle cx="12" cy="9.700" r="2.900"/><path d="M7.500 17.300v-.5a2.500 2.500 0 0 1 2.500-2.500h4a2.500 2.500 0 0 1 2.500 2.500v.5"/></svg>
<div class="card" style="left:1170px;top:405px;width:282px;height:128px;"></div><span class="t m2" style="left:1212.50px;top:424.60px;font-size:14px;line-height:18px;color:#1e1f21;letter-spacing:0.167px;">Please fill in more solutions</span><span class="t m2" style="left:1188.00px;top:446.60px;font-size:14px;line-height:18px;color:#1e1f21;letter-spacing:0.339px;">engineer action items here</span><svg class="abs" style="left:1188.7px;top:426px;" width="16" height="16" viewBox="0 0 16 16" fill="none" stroke="#55565a" stroke-width="1" stroke-linecap="round" stroke-linejoin="round"><circle cx="8" cy="8" r="7.400"/><path d="M5 8.300l2.100 2.100 3.900-4.100" stroke-width="1"/></svg><svg class="abs" style="left:1187.8px;top:491px;" width="24" height="24" viewBox="0 0 24 24" fill="none" stroke="#6d6e6f" stroke-width="1.05" stroke-linecap="round" stroke-linejoin="round"><circle cx="12" cy="12" r="11.500" stroke-dasharray="2.700 1.816" stroke-linecap="butt"/><circle cx="12" cy="9.700" r="2.900"/><path d="M7.500 17.300v-.5a2.500 2.500 0 0 1 2.500-2.500h4a2.500 2.500 0 0 1 2.500 2.500v.5"/></svg>
<svg class="abs" style="left:1184.70px;top:553.50px;" width="9.60" height="9.60" viewBox="-0.062 -0.062 9.688 9.688" preserveAspectRatio="none" fill="none" stroke="#6d6e6f" stroke-width="1.9" stroke-linecap="round" stroke-linejoin="round"><path d="M4.800 0.900v7.800M0.900 4.800h7.800"/></svg><span class="t m5" style="left:1200.50px;top:549.80px;font-size:13px;line-height:17px;color:#6d6e6f;letter-spacing:0.915px;">Add task</span>
<div class="abs" style="left:0;top:724px;width:1300px;height:4px;background:#fbfbfb;border-top:1px solid #ebebeb"></div>
</div>
</body>
</html>
